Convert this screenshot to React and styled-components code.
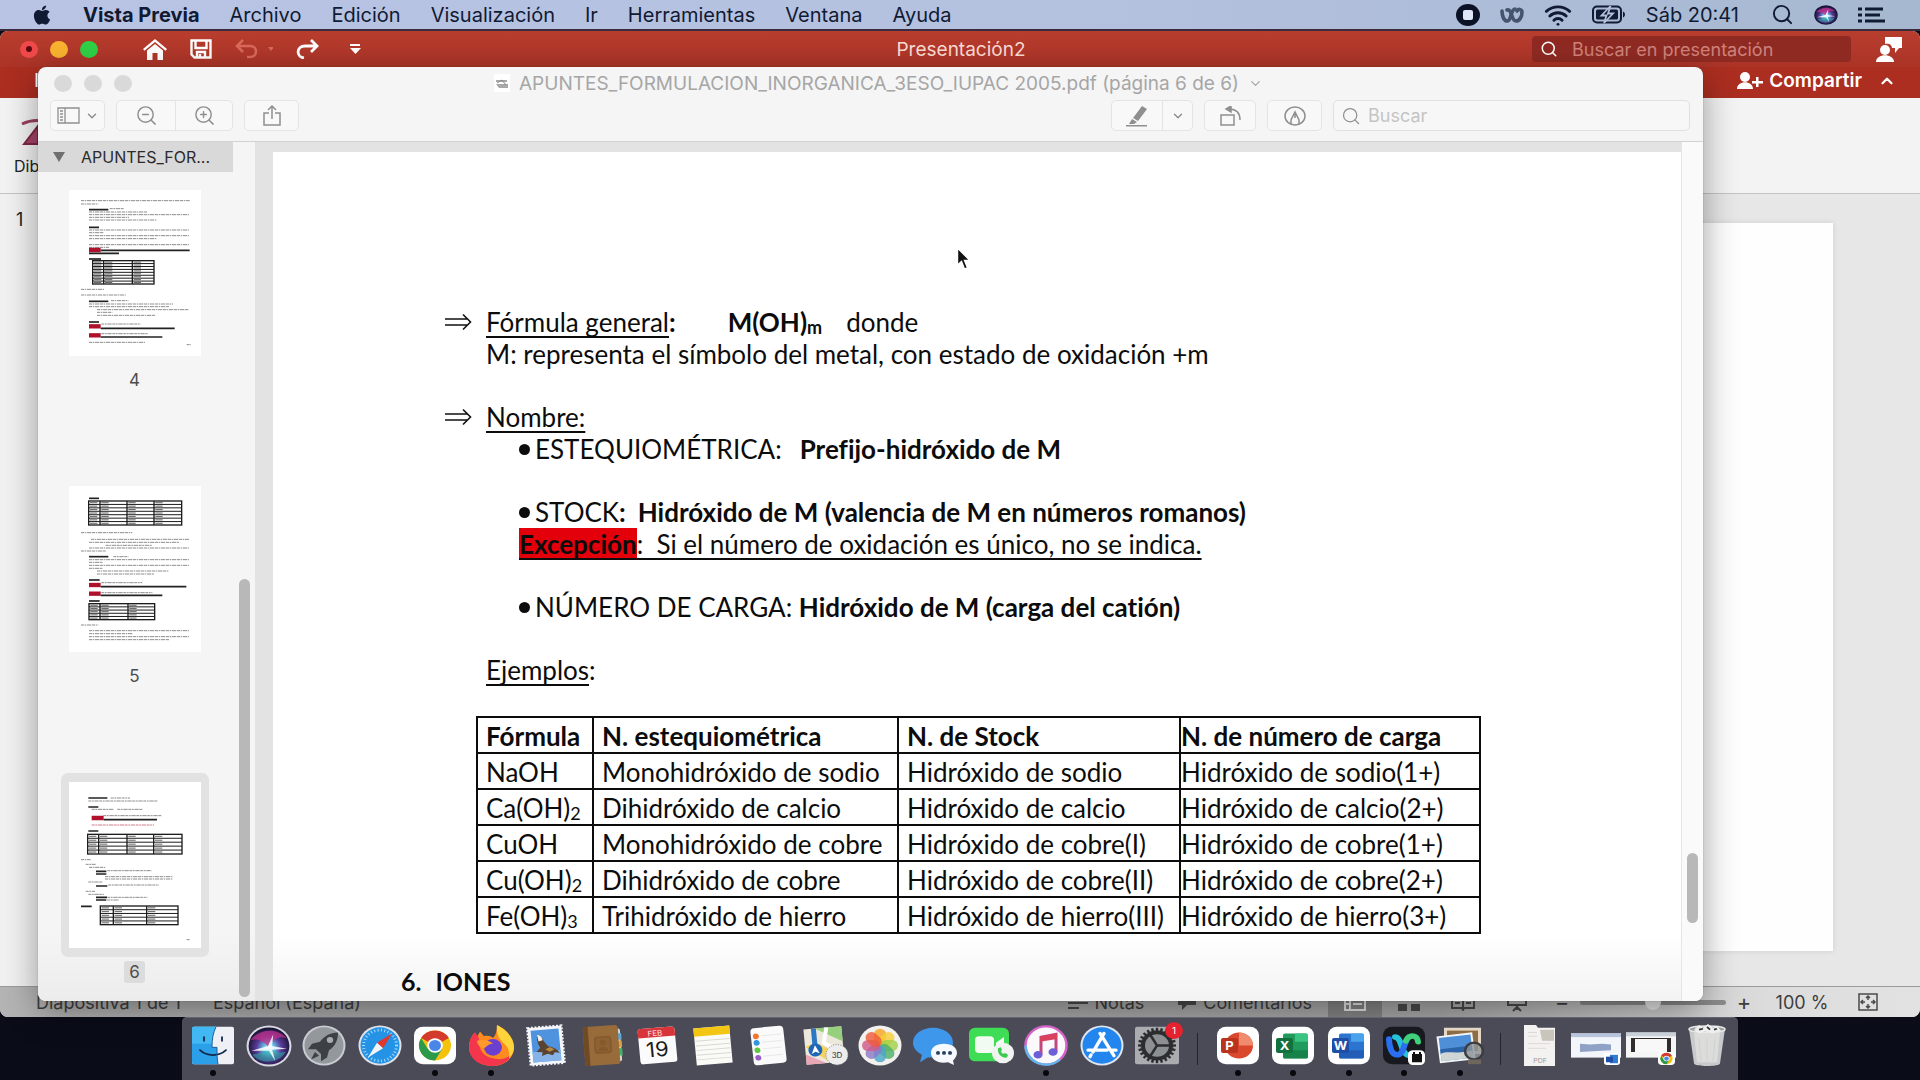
import React, { useState } from 'react'
import styled, { createGlobalStyle, css } from 'styled-components'
import { FaApple } from 'react-icons/fa'
import { Search, ZoomIn, ZoomOut, Wifi, ChevronDown, ChevronUp } from 'lucide-react'

const GlobalStyle = createGlobalStyle`
  * { box-sizing: border-box; }
  body {
    margin: 0;
    overflow: hidden;
    background: #0a0c18;
    font-family: Inter, "Liberation Sans", sans-serif;
  }
  button {
    border: 0;
    padding: 0;
    margin: 0;
    background: none;
    color: inherit;
    font: inherit;
    cursor: default;
  }
  input { font: inherit; }
  svg { display: block; flex: none; }
`

const Desktop = styled.div`
  position: relative;
  display: flex;
  flex-direction: column;
  height: 100vh;
  background: #0a0c18;
`

/* ---------- menu bar ---------- */

const MenuBar = styled.header`
  display: flex;
  justify-content: space-between;
  align-items: center;
  height: 31px;
  padding: 0 34px 0 31px;
  background: linear-gradient(90deg, #b9c4e4, #b3c0de 60%, #a6b8d0);
  border-bottom: 2px solid #3a2c3c;
  color: #101a33;
  font-size: 20px;
  line-height: 28px;
`

const MenuItems = styled.nav`
  display: flex;
  align-items: center;
  gap: 30px;
`

const MenuItem = styled.button`
  font-weight: ${(p) => (p.$strong ? 700 : 400)};
  white-space: nowrap;
`

const MenuExtras = styled.div`
  display: flex;
  align-items: center;
  gap: 20px;
`

const Clock = styled.span`
  margin-right: 12px;
  white-space: nowrap;
`

/* ---------- PowerPoint window ---------- */

const SlidesWindow = styled.section`
  display: flex;
  flex-direction: column;
  flex: 1;
  min-height: 0;
  overflow: hidden;
  background: #e6e6e6;
  border-radius: 8px;
`

const TitleBar = styled.div`
  display: grid;
  grid-template-columns: 1fr auto 1fr;
  align-items: center;
  height: 36px;
  padding: 0 18px 0 20px;
  background: linear-gradient(#b83d2e, #ab3427);
  color: #fbdcd4;
  font-size: 19px;
`

const TitleTools = styled.div`
  display: flex;
  align-items: center;
  gap: 23px;
`

const Lights = styled.div`
  display: flex;
  gap: 12px;
  margin-right: 22px;
`

const Light = styled.button`
  display: grid;
  place-items: center;
  width: 18px;
  height: 17px;
  border-radius: 50%;
  background: ${(p) => p.$color};
`

const LightDot = styled.i`
  width: 6px;
  height: 6px;
  border-radius: 50%;
  background: #5c0a10;
`

const TitleRight = styled.div`
  display: flex;
  align-items: center;
  justify-content: flex-end;
  gap: 24px;
  color: #fff;
`

const SlideSearch = styled.label`
  display: flex;
  align-items: center;
  gap: 14px;
  width: 319px;
  height: 26px;
  padding: 0 8px;
  border-radius: 4px;
  background: #8f2a23;
  input {
    flex: 1;
    min-width: 0;
    padding: 0;
    border: 0;
    outline: 0;
    background: none;
    color: #fff;
    font-size: 18px;
  }
  input::placeholder { color: #d0827a; opacity: 1; }
`

const TabRow = styled.div`
  display: flex;
  align-items: center;
  justify-content: space-between;
  height: 31px;
  padding: 0 24px 4px 34px;
  background: #ac2e20;
  color: #fff;
  font-size: 19px;
`

const ShareArea = styled.div`
  display: flex;
  align-items: center;
  gap: 16px;
`

const ShareLink = styled.button`
  display: flex;
  align-items: center;
  gap: 6px;
  font-weight: 600;
`

const Ribbon = styled.div`
  height: 96px;
  padding: 20px 14px 0;
  background: #f4f3f3;
  border-bottom: 1px solid #c4c4c4;
`

const RibbonButton = styled.button`
  display: flex;
  flex-direction: column;
  align-items: flex-start;
  gap: 8px;
  font-size: 16px;
  line-height: 24px;
  color: #222;
`

const Workspace = styled.div`
  display: flex;
  flex: 1;
  min-height: 0;
`

const SlideList = styled.ol`
  width: 15%;
  margin: 0;
  padding: 14px 16px;
  list-style: none;
  background: #f1f1f1;
  font-size: 18px;
  line-height: 24px;
  color: #222;
`

const SlideArea = styled.div`
  display: flex;
  flex: 1;
  padding: 29px 87px 35px 40px;
  background: #e7e7e7;
`

const Slide = styled.div`
  flex: 1;
  background: #fefefe;
  box-shadow: 0 0 6px rgba(0, 0, 0, 0.1);
`

const StatusBar = styled.footer`
  display: flex;
  align-items: center;
  justify-content: space-between;
  height: 31px;
  padding: 0 35px 0 36px;
  border-top: 1px solid #9b9b9b;
  background: linear-gradient(90deg, #b4b4b4, #a9a9a9 20%, #a9a9a9 75%, #dcdcdc 92%, #e2e2e2);
  color: #3e3e3e;
  font-size: 18px;
`

const StatusGroup = styled.div`
  display: flex;
  align-items: center;
  gap: ${(p) => p.$gap || 8}px;
  height: 100%;
  white-space: nowrap;
`

const StatusButton = styled.button`
  display: flex;
  align-items: center;
  gap: 6px;
`

const ViewModes = styled.div`
  display: flex;
  height: 100%;
  margin-left: 8px;
`

const ViewMode = styled.button`
  display: grid;
  place-items: center;
  width: 54px;
  background: ${(p) => (p.$active ? '#868686' : 'none')};
`

const ZoomStep = styled.button`
  width: 20px;
  font-size: 22px;
  line-height: 22px;
`

const ZoomSlider = styled.input`
  appearance: none;
  width: 146px;
  height: 5px;
  margin: 0;
  border-radius: 3px;
  background: #8c8c8c;
  &::-webkit-slider-thumb {
    appearance: none;
    width: 16px;
    height: 16px;
    border-radius: 50%;
    background: #e8e8e8;
  }
`

const ZoomValue = styled.button`
  width: 80px;
`

const FitButton = styled.button`
  display: grid;
  place-items: center;
  width: 35px;
`

/* ---------- Preview window ---------- */

const PreviewWindow = styled.section`
  position: absolute;
  top: 67px;
  right: 217px;
  bottom: 79px;
  left: 38px;
  z-index: 1;
  display: flex;
  flex-direction: column;
  overflow: hidden;
  border-radius: 8px;
  background: #f5f5f5;
  box-shadow: 0 10px 34px rgba(0, 0, 0, 0.38), 0 0 1px rgba(0, 0, 0, 0.5);
`

const PreviewTitle = styled.div`
  display: grid;
  grid-template-columns: 1fr auto 1fr;
  align-items: center;
  height: 32px;
  padding-left: 16px;
  color: #a6a6a6;
  font-size: 19px;
`

const FileName = styled.div`
  display: flex;
  align-items: center;
  gap: 9px;
  white-space: nowrap;
`

const Toolbar = styled.div`
  display: flex;
  align-items: center;
  justify-content: space-between;
  height: 43px;
  padding: 0 13px 9px 12px;
  border-bottom: 1px solid #d2d2d2;
  color: #8f8f8f;
`

const ToolGroup = styled.div`
  display: flex;
  align-items: center;
  gap: 11px;
`

const Segments = styled.div`
  display: flex;
  height: 31px;
  border: 1px solid #e4e4e4;
  border-radius: 5px;
  background: #f8f8f8;
`

const Tool = styled.button`
  display: flex;
  align-items: center;
  justify-content: center;
  gap: 5px;
  width: ${(p) => p.$width || 53}px;
  & + & { border-left: 1px solid #e4e4e4; }
`

const FindBox = styled.label`
  display: flex;
  align-items: center;
  gap: 7px;
  width: 357px;
  height: 31px;
  padding: 0 7px;
  border: 1px solid #e0e0e0;
  border-radius: 5px;
  background: #f7f7f7;
  input {
    flex: 1;
    min-width: 0;
    padding: 0;
    border: 0;
    outline: 0;
    background: none;
    font-size: 18px;
  }
  input::placeholder { color: #c4c4c4; opacity: 1; }
`

const PreviewBody = styled.div`
  display: flex;
  flex: 1;
  min-height: 0;
`

const Sidebar = styled.aside`
  display: flex;
  width: 217px;
  background: linear-gradient(#f5f5f5 92%, #ececec);
`

const SidebarList = styled.div`
  display: flex;
  flex-direction: column;
  flex: 1;
`

const SidebarHeader = styled.button`
  display: flex;
  align-items: center;
  gap: 16px;
  height: 30px;
  padding-left: 15px;
  background: #d9d9d9;
  color: #2b2b2b;
  font-size: 16px;
  white-space: nowrap;
`

const Thumbs = styled.div`
  display: flex;
  flex-direction: column;
  align-items: center;
  gap: 86px;
  padding: 9px 2px 0 0;
`

const ThumbButton = styled.button`
  display: flex;
  flex-direction: column;
  align-items: center;
  gap: 4px;
  color: #4d4d4d;
  font-size: 17px;
`

const ThumbFrame = styled.span`
  padding: 9px 8px;
  border-radius: 7px;
  background: ${(p) => (p.$selected ? '#e2e2e2' : 'none')};
`

const ThumbLabel = styled.span`
  padding: 0 5px;
  border-radius: 3px;
  line-height: 22px;
  background: ${(p) => (p.$selected ? '#dcdcdc' : 'none')};
`

const Track = styled.div`
  display: flex;
  flex-direction: column;
  width: 22px;
  padding: ${(p) => p.$pad};
  ${(p) => p.$line && css`
    border-left: 1px solid #e6e6e6;
    background: #fafafa;
  `}
`

const TrackThumb = styled.div`
  width: 11px;
  height: ${(p) => p.$size};
  border-radius: 6px;
  background: #b8b8b8;
`

const PageView = styled.main`
  flex: 1;
  min-width: 0;
  padding: 10px 0 0 18px;
  overflow: hidden;
  background: #e3e3e3;
`

const Page = styled.article`
  height: 100%;
  padding: 154px 128px 0;
  background: linear-gradient(#fff 92%, #f3f3f3);
  color: #0c0c0c;
  font-family: Lato, Carlito, sans-serif;
  font-size: 26px;
  font-variant-ligatures: none;
  line-height: 32px;
`

const Indented = styled.div`
  display: flex;
  flex-direction: column;
  gap: 31px;
  padding-left: 85px;
`

const Paragraph = styled.div`
  white-space: pre;
`

const Heading = styled.div`
  display: flex;
  align-items: center;
  gap: 14px;
  margin-left: -42px;
`

const Bullets = styled.div`
  padding-left: 33px;
`

const Bullet = styled.div`
  display: flex;
  align-items: center;
  gap: 5px;
  white-space: pre;
  &::before {
    content: "";
    width: 11px;
    height: 11px;
    border-radius: 50%;
    background: #0c0c0c;
  }
`

const Tabbed = styled.span`
  padding-left: ${(p) => p.$gap}px;
`

const U = styled.span`
  text-decoration: underline;
  text-decoration-thickness: 2px;
  text-underline-offset: 4px;
  text-decoration-skip-ink: none;
`

const Marked = styled.b`
  display: inline-block;
  background: #e3000b;
`

const Sub = styled.sub`
  font-size: 18px;
  line-height: 0;
  vertical-align: -2px;
`

const Examples = styled.table`
  width: 1003px;
  max-width: 100%;
  margin: 30px 0 31px 75px;
  border-collapse: collapse;
  table-layout: fixed;
  td, th {
    height: 36px;
    padding: 2px 0 0 8px;
    border: 2px solid #0c0c0c;
    line-height: 30px;
    text-align: left;
    white-space: nowrap;
  }
  td:last-child, th:last-child { padding-left: 0; }
`

const Chapter = styled.h2`
  display: flex;
  gap: 14px;
  margin: 0;
  font-size: 25px;
  line-height: 32px;
`

const Pointer = styled.svg`
  position: absolute;
  top: 246px;
  left: 956px;
  z-index: 2;
`

/* ---------- dock ---------- */

const Dock = styled.nav`
  position: relative;
  z-index: 3;
  display: flex;
  align-self: center;
  width: 81%;
  height: 63px;
  padding: 0 3px;
  border-radius: 5px 5px 0 0;
  background: #4b4b58;
  border-top: 1px solid #63636e;
`

const DockButton = styled.button`
  display: flex;
  flex: 1;
  flex-direction: column;
  align-items: center;
  gap: 4px;
  padding-top: 7px;
`

const RunningDot = styled.i`
  width: 6px;
  height: 6px;
  border-radius: 50%;
  background: #07070d;
`

const DockLine = styled.span`
  width: 25px;
  padding: 15px 12px;
  background: #23232d content-box;
`

/* ---------- drawings ---------- */

// Each line is [x1, x2, y, kind]: b = bold or underlined, r = red label, p = pink text
const pages = [
  {
    number: 4,
    lines: [
      [36, 362, 32], [36, 88, 42], [60, 118, 59, 'b'], [122, 165, 56], [60, 235, 66], [60, 360, 74], [60, 180, 82],
      [60, 262, 90], [60, 90, 112, 'b'], [60, 360, 120], [60, 105, 128], [60, 360, 137], [60, 262, 146],
      [60, 360, 164], [60, 120, 172], [60, 95, 180, 'r'], [95, 362, 181, 'b'], [60, 150, 190, 'b'], [60, 96, 207, 'b'],
      [36, 105, 298], [36, 170, 315], [60, 118, 334, 'b'], [126, 178, 332], [60, 312, 342], [60, 300, 350],
      [84, 360, 359], [84, 130, 367], [84, 260, 376], [60, 90, 396, 'b'], [97, 215, 402], [60, 95, 409, 'r'],
      [95, 317, 415, 'b'], [60, 95, 436, 'r'], [97, 236, 431], [95, 280, 441, 'b'], [60, 228, 457], [353, 366, 464],
    ],
    tables: [{ x: 71, y: 212, w: 184, h: 70, rows: 8, cols: [104, 190] }],
  },
  {
    number: 5,
    lines: [
      [60, 90, 37, 'b'], [36, 190, 140], [66, 360, 160], [60, 330, 169], [110, 248, 178], [60, 360, 186], [36, 110, 195],
      [60, 118, 212, 'b'], [133, 178, 212], [60, 360, 221], [60, 100, 229], [60, 360, 238], [60, 100, 247],
      [84, 300, 255], [84, 255, 264], [60, 92, 282, 'b'], [97, 220, 290], [60, 95, 297, 'r'], [95, 352, 302, 'b'],
      [60, 95, 323, 'r'], [97, 250, 320], [95, 280, 328, 'b'], [60, 92, 345, 'b'], [36, 88, 417], [60, 360, 434],
      [60, 190, 443], [60, 360, 452], [60, 300, 461],
    ],
    tables: [
      { x: 59, y: 45, w: 279, h: 72, rows: 7, cols: [93, 174, 255] },
      { x: 60, y: 353, w: 197, h: 48, rows: 5, cols: [93, 177] },
    ],
  },
  {
    number: 6,
    lines: [
      [58, 115, 48, 'b'], [125, 183, 48], [58, 265, 57], [58, 88, 75, 'b'], [68, 135, 82], [145, 222, 82],
      [103, 278, 101], [68, 104, 108, 'r'], [104, 264, 113, 'b'], [68, 255, 129, 'p'], [58, 88, 147, 'b'],
      [36, 65, 233], [50, 80, 247], [60, 110, 256], [81, 112, 268, 'b'], [115, 248, 266], [81, 112, 276, 'b'],
      [108, 310, 284], [108, 310, 291], [58, 100, 300], [81, 115, 312, 'b'], [118, 270, 309], [50, 78, 328],
      [58, 105, 337], [81, 114, 346, 'b'], [115, 235, 346], [81, 112, 354, 'b'], [115, 150, 354],
      [36, 68, 373, 'b'], [353, 362, 473],
    ],
    tables: [
      { x: 56, y: 157, w: 283, h: 59, rows: 5, cols: [89, 174, 254] },
      { x: 94, y: 372, w: 233, h: 56, rows: 5, cols: [133, 233] },
    ],
  },
]

const lineStyles = {
  b: { stroke: '#222', strokeWidth: 5 },
  r: { stroke: '#b0102c', strokeWidth: 13 },
  p: { stroke: '#cf7c86', strokeWidth: 3, strokeDasharray: '9 2 5 2 13 2' },
  t: { stroke: '#8d8d8d', strokeWidth: 3, strokeDasharray: '9 2 5 2 13 2' },
}

function PageThumb({ page }) {
  return (
    <svg width="132" height="166" viewBox="0 0 396 498">
      <rect width="396" height="498" fill="#fff" />
      {page.lines.map(([x1, x2, y, kind], i) => (
        <line key={i} x1={x1} x2={x2} y1={y} y2={y} {...lineStyles[kind || 't']} />
      ))}
      {page.tables.map((t) => {
        const step = t.h / t.rows
        const rows = Array.from({ length: t.rows }, (_, i) => t.y + i * step)
        return (
          <g key={t.y} stroke="#1c1c1c" strokeWidth="4" fill="none">
            <rect x={t.x} y={t.y} width={t.w} height={t.h} />
            {rows.slice(1).map((y) => <line key={y} x1={t.x} x2={t.x + t.w} y1={y} y2={y} strokeWidth="3" />)}
            {t.cols.map((x) => <line key={x} x1={x} x2={x} y1={t.y} y2={t.y + t.h} />)}
            {rows.map((y) => [t.x, ...t.cols].map((x) => (
              <line key={x + '-' + y} x1={x + 4} x2={x + 26} y1={y + step / 2} y2={y + step / 2} stroke="#666" strokeWidth="3" />
            )))}
          </g>
        )
      })}
    </svg>
  )
}

const Arrow = () => (
  <svg width="28" height="18" viewBox="0 0 28 18" fill="none" stroke="#111" strokeWidth="1.6">
    <path d="M1 6h23M1 12h23M19 1.500l7.500 7.500l-7.500 7.500" />
  </svg>
)

const WebexMark = () => (
  <svg width="24" height="16" viewBox="0 0 24 16" fill="none" stroke="#46536c" strokeWidth="3.600" strokeLinecap="round">
    <path d="M2 4c0 5 2 10 5 10s3-3 4-6 2-6 4-6" />
    <path d="M7 3c3-1 4 3 5 6s2 5 4 5c4 0 6-5 6-9 0-2-3-4-5-1" />
  </svg>
)

const BatteryMark = () => (
  <svg width="34" height="19" viewBox="0 0 34 19">
    <rect x="1" y="1.500" width="28" height="16" rx="4" fill="none" stroke="#101a33" strokeWidth="2" />
    <rect x="4" y="4.500" width="22" height="10" rx="1.500" fill="#101a33" />
    <path d="M31 6.500v6c2.600-.8 2.600-5.200 0-6z" fill="#101a33" />
    <path d="M18.500 1L9.500 10.500h5L12 18l9-9.500h-5z" fill="#101a33" stroke="#b1bfdc" strokeWidth="1.800" />
  </svg>
)

const SiriMark = ({ size = 24 }) => (
  <svg width={size} height={size - 4} viewBox="0 0 44 44" preserveAspectRatio="none">
    <defs>
      <radialGradient id="siriGlow" cx=".5" cy=".55" r=".55">
        <stop offset="0" stopColor="#e9fbff" />
        <stop offset=".22" stopColor="#62c7e8" />
        <stop offset=".55" stopColor="#5b3a9a" />
        <stop offset="1" stopColor="#12102c" />
      </radialGradient>
    </defs>
    <circle cx="22" cy="22" r="21.500" fill={size > 30 ? '#d9d8e0' : '#1a1640'} />
    <circle cx="22" cy="22" r="19.500" fill="url(#siriGlow)" />
    <path d="M4 16C12 4 30 2 39 14c-8-4-14 2-18 9C16 16 10 14 4 16z" fill="#c3308c" opacity=".75" />
    <path d="M6 31c8-1 12-4 16-8 4 5 9 7 16 5-6 12-24 14-32 3z" fill="#29b7a8" opacity=".55" />
    <path d="M5 27l16-5 5-12-1 12 14 3-14 1 3 12-6-11z" fill="#fff" opacity=".85" />
  </svg>
)

const ListMark = () => (
  <svg width="28" height="18" viewBox="0 0 28 18" stroke="#101a33" strokeWidth="3">
    <path d="M0 3h4M0 9h4M0 15h4M7 3h18M7 9h15M7 15h20" />
  </svg>
)

const gear = Array.from({ length: 24 }, (_, i) => i * 15)
const petals = ['#f6a623', '#f7d038', '#a3cf4b', '#4fb06d', '#4aa7c9', '#8c79c6', '#cf5a8b', '#ef5a3c']

const Office = ({ letter, dark, mid, light, round }) => (
  <>
    <rect x="1" y="2" width="42" height="40" rx="9" fill="#fff" />
    {round ? (
      <>
        <circle cx="23" cy="22" r="14" fill={mid} />
        <path d="M23 8a14 14 0 0 1 14 14H23z" fill={light} />
      </>
    ) : (
      <>
        <rect x="12" y="9" width="25" height="27" rx="2" fill={mid} />
        <path d="M24 9h11a2 2 0 0 1 2 2v7H24z" fill={light} />
        <path d="M12 27h25v7a2 2 0 0 1-2 2H14a2 2 0 0 1-2-2z" fill={dark} opacity=".6" />
      </>
    )}
    <rect x="5" y="14" width="17" height="16" rx="2" fill={dark} />
    <text x="13.500" y="27" fontSize="13" fontWeight="700" textAnchor="middle" fill="#fff">{letter}</text>
  </>
)

const ChromeRing = () => (
  <>
    <circle r="16" fill="#f4c20d" />
    <path d="M0 0L-13.900-8A16 16 0 0 1 13.900-8z" fill="#d33b2c" />
    <path d="M-13.900-8A16 16 0 0 0 0 16L7 4-7 4z" fill="#2d9a4b" />
    <circle r="7.800" fill="#fff" />
    <circle r="6" fill="#4a86e8" />
  </>
)

const drawings = {
  Finder: (
    <>
      <rect x="1" y="2" width="42" height="40" rx="2" fill="#eef0f5" />
      <path d="M3 2h22c-3 7-4 13-4 22h5c0 7 0 12 1 18H3a2 2 0 0 1-2-2V4a2 2 0 0 1 2-2z" fill="#2b9fe8" />
      <path d="M3 2h22c-3 7-4 13-4 18H1V4a2 2 0 0 1 2-2z" fill="#42b8f2" />
      <path d="M13 13v4M31 13v4M9 27c7 7 19 7 26 0" fill="none" stroke="#12294a" strokeWidth="1.800" strokeLinecap="round" />
      <path d="M25 2c-3 7-4 13-4 22h5c0 7 0 12 1 18" fill="none" stroke="#1c5e96" strokeWidth="1" />
    </>
  ),
  Launchpad: (
    <>
      <circle cx="22" cy="22" r="21.500" fill="#c9ccd0" />
      <circle cx="22" cy="22" r="19.500" fill="#93989d" />
      <path d="M36 8c-8 0-14 4-18 10l-8 2-4 6 8 0 5 5 0 8 6-4 2-8c6-4 9-11 9-19z" fill="#3d4044" />
      <circle cx="28" cy="16" r="3.200" fill="#a8acb0" />
      <path d="M13 29l-4 8 8-4z" fill="#3d4044" />
    </>
  ),
  Safari: (
    <>
      <circle cx="22" cy="22" r="21.500" fill="#dfe3e8" />
      <circle cx="22" cy="22" r="19.500" fill="#2493e6" />
      <circle cx="22" cy="22" r="16.500" fill="none" stroke="#a8dcfb" strokeWidth="3" strokeDasharray="1 2.400" />
      <path d="M34 9L25 25l-6-6z" fill="#e3362c" />
      <path d="M10 35l15-10-6-6z" fill="#f3f4f6" />
    </>
  ),
  Chrome: (
    <>
      <rect x="1" y="2" width="42" height="40" rx="9" fill="#fff" />
      <g transform="translate(22 22)"><ChromeRing /></g>
    </>
  ),
  Firefox: (
    <>
      <path d="M28 0c8 4 17 13 17 24 0 12-10 20-22 20S0 35 0 24C0 17 3 11 6 8l2 5 3-6 4 5c4-1 7 0 9 2 3-3 4-8 4-14z" fill="#ff8a1f" />
      <path d="M0 24c0 12 10 20 23 20 10 0 18-6 21-14-6 6-12 8-19 6C14 34 9 26 10 14L6 8C3 11 0 17 0 24z" fill="#f4364c" />
      <path d="M28 0c8 4 17 13 17 24 0 5-2 9-5 12 1-8-1-13-6-17-3-4-7-7-6-19z" fill="#ffd43a" />
      <circle cx="24" cy="24" r="9" fill="#6b3fd0" />
      <path d="M8 17c6-2 12-1 16 3-5 0-6 3-9 5-4-1-7-4-7-8z" fill="#ff9a2b" />
    </>
  ),
  Mail: (
    <g transform="rotate(-5 22 22)">
      <rect x="5" y="2" width="34" height="40" fill="#f4f6fa" stroke="#f4f6fa" strokeWidth="2.500" strokeDasharray="2 1.600" />
      <rect x="8" y="5" width="28" height="34" fill="#4f93df" />
      <path d="M8 28h28v11H8z" fill="#87b4e8" />
      <path d="M14 10c3 0 5 3 6 7l4 6c5 1 9 4 11 8l-5-1-2 3-5-2-6 2 1-4-6-1 4-4c-2-4-3-9-2-14z" fill="#5a4330" />
      <path d="M14 10c3 0 5 3 5 6l-4 1z" fill="#eee" />
      <path d="M21 26l5-2 4 3-5 2z" fill="#b98a3f" />
    </g>
  ),
  Contactos: (
    <g transform="rotate(-4 22 22)">
      <rect x="36" y="5" width="5" height="35" rx="2" fill="#ddd6c4" />
      <path d="M38 10h4v7h-4z" fill="#5aa9d8" />
      <path d="M38 18h4v7h-4z" fill="#d9a13c" />
      <path d="M38 26h4v8h-4z" fill="#43b06a" />
      <rect x="4" y="1" width="35" height="42" rx="3" fill="#976b3a" />
      <path d="M4 4a3 3 0 0 1 3-3h2v42H7a3 3 0 0 1-3-3z" fill="#6f4a25" />
      <rect x="15" y="13" width="16" height="17" rx="3" fill="#8d6233" stroke="#845a2d" strokeWidth="1.500" />
      <circle cx="23" cy="19" r="3" fill="#845a2d" />
      <path d="M18 28c1-6 9-6 10 0z" fill="#845a2d" />
    </g>
  ),
  Calendario: (
    <g transform="rotate(-5 22 22)">
      <rect x="4" y="3" width="37" height="38" rx="3" fill="#fbfbfb" />
      <path d="M4 13V6a3 3 0 0 1 3-3h31a3 3 0 0 1 3 3v7z" fill="#d8343a" />
      <text x="21" y="11.500" fontSize="8" textAnchor="middle" fill="#ffe3e3">FEB</text>
      <text x="22" y="34" fontSize="22" textAnchor="middle" fill="#1c1c1c">19</text>
    </g>
  ),
  Notas: (
    <g transform="rotate(-5 22 22)">
      <rect x="4" y="2" width="36" height="40" fill="#fafaf7" />
      <rect x="4" y="2" width="36" height="9" fill="#f3c614" />
      <path d="M5 16h34M5 21h34M5 26h34M5 31h34M5 36h34" stroke="#d9d9d2" strokeWidth="1" />
    </g>
  ),
  Recordatorios: (
    <g transform="rotate(-6 22 22)">
      <rect x="6" y="2" width="33" height="40" rx="4" fill="#fafafa" />
      <path d="M16 11h20M16 18h20M16 25h20M16 33h20" stroke="#e8e8e8" />
      <circle cx="11" cy="11" r="3" fill="#f2762e" />
      <circle cx="11" cy="18" r="3" fill="#3495dd" />
      <circle cx="11" cy="26" r="3" fill="#5cc83c" />
      <circle cx="11" cy="34" r="3" fill="#9a5cc8" />
    </g>
  ),
  Mapas: (
    <>
      <g transform="rotate(-5 22 22)">
        <rect x="3" y="3" width="38" height="38" fill="#ece8dc" />
        <path d="M14 3h27v16z" fill="#96d07c" />
        <path d="M3 22l11-4 27 17v6H28z" fill="#f5d35c" />
        <path d="M3 30l20 11H3z" fill="#e9a6b4" />
        <path d="M26 3l-4 16 19 14" fill="none" stroke="#fff" strokeWidth="4" />
        <path d="M13 3v22" stroke="#2c77c4" strokeWidth="5" />
        <circle cx="13" cy="26" r="7" fill="#1e66b8" />
        <path d="M13 21l4 9-4-2-4 2z" fill="#fff" />
      </g>
      <circle cx="35" cy="32" r="11" fill="#ededed" stroke="#777" strokeWidth="1" strokeDasharray="1 1.500" />
      <text x="35" y="35" fontSize="8" textAnchor="middle" fill="#333">3D</text>
    </>
  ),
  Fotos: (
    <>
      <circle cx="22" cy="22" r="21.500" fill="#f3f1ee" />
      {petals.map((fill, i) => (
        <rect key={fill} x="16" y="4" width="12" height="18" rx="6" fill={fill} opacity=".82" transform={`rotate(${i * 45} 22 22)`} />
      ))}
    </>
  ),
  Mensajes: (
    <>
      <path d="M20 3c11 0 20 7 20 16s-9 16-20 16c-2 0-3 0-5-.5L7 40l2-8C4 29 0 25 0 19 0 10 9 3 20 3z" fill="#3f97ec" />
      <path d="M31 20c8 0 13 4 13 10 0 3-2 6-4 8l1 5-6-3c-10 2-17-3-17-10 0-6 5-10 13-10z" fill="#f5f8fc" />
      <circle cx="25" cy="30" r="2" fill="#27405f" />
      <circle cx="31" cy="30" r="2" fill="#27405f" />
      <circle cx="37" cy="30" r="2" fill="#27405f" />
    </>
  ),
  FaceTime: (
    <>
      <rect x="0" y="3" width="40" height="36" rx="6" fill="#3fdc55" />
      <rect x="6" y="12" width="19" height="18" rx="4" fill="#f2fbf2" />
      <path d="M27 19l8-6v16l-8-6z" fill="#f2fbf2" />
      <circle cx="34" cy="30" r="11" fill="#f1f3f1" />
      <path d="M29 25c-1 6 4 11 9 10l1-3-3-2-2 1c-1-1-2-2-2-3l1-1-1-3z" fill="#3acb50" />
    </>
  ),
  iTunes: (
    <>
      <circle cx="22" cy="22" r="20.500" fill="#fbf9fc" stroke="#d563c8" strokeWidth="2.500" />
      <path d="M1.500 22A20.500 20.500 0 0 0 36 37" fill="none" stroke="#5fb7ea" strokeWidth="2.500" />
      <path d="M17 32V13l15-3v19" fill="none" stroke="#c2467f" strokeWidth="3" />
      <path d="M16 12l17-3v6l-17 3z" fill="#d9415f" />
      <ellipse cx="14" cy="32" rx="4.500" ry="4" fill="#6d5fd5" />
      <ellipse cx="29" cy="29" rx="4.500" ry="4" fill="#6d5fd5" />
    </>
  ),
  'App Store': (
    <>
      <circle cx="22" cy="22" r="21.500" fill="#dfe6ef" />
      <circle cx="22" cy="22" r="19.500" fill="#2385ee" />
      <path d="M24 9L13 29M20 9l14 24M8 27h19M31 27h5M11 32l-1 2" stroke="#fff" strokeWidth="3.400" strokeLinecap="round" />
    </>
  ),
  'Preferencias del Sistema': (
    <>
      <rect x="0" y="2" width="44" height="40" rx="2" fill="#a9adb0" />
      <circle cx="22" cy="22" r="17" fill="#8c9093" />
      {gear.map((a) => <rect key={a} x="20.800" y="3" width="2.400" height="5" fill="#2b2d2f" transform={`rotate(${a} 22 22)`} />)}
      <circle cx="22" cy="22" r="14" fill="none" stroke="#2b2d2f" strokeWidth="4" />
      <circle cx="22" cy="22" r="9" fill="#8c9093" />
      <path d="M22 22L15 10M22 22h13M22 22l-7 12" stroke="#2b2d2f" strokeWidth="2.600" />
      <circle cx="39" cy="6" r="9" fill="#e6222e" />
      <text x="39" y="10" fontSize="10" textAnchor="middle" fill="#fff">1</text>
    </>
  ),
  PowerPoint: <Office letter="P" dark="#b8341f" mid="#d9482d" light="#f08b6e" round />,
  Excel: <Office letter="X" dark="#12713d" mid="#1f9c5c" light="#3bc481" />,
  Word: <Office letter="W" dark="#1d4fa8" mid="#2b74d0" light="#49a3ec" />,
  Webex: (
    <>
      <rect x="1" y="2" width="42" height="40" rx="9" fill="#17191e" />
      <path d="M13 13c5 0 6 9 8 14 2 4 5 6 8 5" fill="none" stroke="#27c1d8" strokeWidth="6" strokeLinecap="round" />
      <path d="M7 15c0 9 3 17 8 17 6 0 6-8 9-14" fill="none" stroke="#2a6ff0" strokeWidth="6" strokeLinecap="round" />
      <path d="M24 17c3-7 11-7 12 1" fill="none" stroke="#3ed07a" strokeWidth="6" strokeLinecap="round" />
      <rect x="26" y="27" width="17" height="16" rx="5" fill="#fff" />
      <path d="M30 31h10v9H30zM31 29h2v3h-2zM37 29h2v3h-2z" fill="#111" />
    </>
  ),
  'Vista Previa': (
    <>
      <path d="M6 3h37v28H6z" fill="#e4d7c3" />
      <path d="M9 6h31v22H9z" fill="#8e6d44" />
      <g transform="rotate(-7 18 24)">
        <path d="M0 10h36v29H0z" fill="#f2f4f6" />
        <path d="M2 12h32v25H2z" fill="#4f8fd8" />
        <path d="M2 24h32v6H2z" fill="#2d63a8" />
        <path d="M2 29c8-3 14 3 32 0v8H2z" fill="#cfd6d4" />
      </g>
      <circle cx="36" cy="28" r="9" fill="#8f9598" fillOpacity=".8" stroke="#3c3c40" strokeWidth="2.500" />
      <path d="M30 37h13v5H30z" fill="#6f665e" />
    </>
  ),
  'Documento PDF': (
    <>
      <path d="M6 0h12l2 3h17v41H6z" fill="#f4f2f0" />
      <path d="M22 5h14v12H24z" fill="#c9c5bc" />
      <path d="M10 8h9M10 12h9M10 20h22M10 25h18" stroke="#dcd8d4" />
      <text x="22" y="41" fontSize="7" textAnchor="middle" fill="#999">PDF</text>
    </>
  ),
  'Ventana de Word': (
    <>
      <rect x="-3" y="9" width="50" height="26" fill="#f2f5fa" />
      <rect x="-3" y="9" width="50" height="4" fill="#b7c4dc" />
      <path d="M6 20l10 1 12-1 9 1v6l-14 1-17 1z" fill="#8fa1c4" />
      <rect x="30" y="30" width="16" height="13" rx="3" fill="#fff" />
      <path d="M36 32h8v9h-8z" fill="#2f7bd6" />
      <path d="M32 34h7v6h-7z" fill="#1d4fa8" />
    </>
  ),
  'Ventana de Chrome': (
    <>
      <rect x="-3" y="8" width="50" height="27" fill="#f5f5f5" />
      <path d="M-3 8h50v4H-3z" fill="#c8d0da" />
      <path d="M2 14h40v15H2z" fill="#302c2b" />
      <path d="M6 15h32v14H6z" fill="#f8f8f8" />
      <rect x="29" y="29" width="17" height="14" rx="4" fill="#fff" />
      <g transform="translate(37.500 36) scale(.38)"><ChromeRing /></g>
    </>
  ),
  Papelera: (
    <>
      <path d="M4 4h36l-5 37c0 4-26 4-26 0z" fill="#c8cacb" />
      <path d="M9 8h26l-3 32H12z" fill="#dcdcda" />
      <ellipse cx="22" cy="4.500" rx="18" ry="3.500" fill="#9b9d9f" stroke="#e8e8e8" strokeWidth="1.500" />
      <path d="M9 5l5-5 4 3 5-4 5 4 4-2 4 5-8 3-8-2-6 2z" fill="#efefef" />
      <path d="M14 5l4-1M22 2l3 3M29 5l3-1" stroke="#333" strokeWidth="1.800" />
      <path d="M14 14l2 25M22 14v27M30 14l-2 25" stroke="#cfd0d0" />
    </>
  ),
}

const dockItems = [
  ['Finder', true], ['Siri'], ['Launchpad'], ['Safari'], ['Chrome', true], ['Firefox', true], ['Mail'], ['Contactos'],
  ['Calendario'], ['Notas'], ['Recordatorios'], ['Mapas'], ['Fotos'], ['Mensajes'], ['FaceTime'], ['iTunes', true],
  ['App Store'], ['Preferencias del Sistema'], null,
  ['PowerPoint', true], ['Excel', true], ['Word', true], ['Webex', true], ['Vista Previa', true], null,
  ['Documento PDF'], ['Ventana de Word'], ['Ventana de Chrome'], ['Papelera'],
]

function DockIcon({ name }) {
  if (name === 'Siri') return <SiriMark size={46} />
  return (
    <svg width="44" height="41" viewBox="0 0 44 44" preserveAspectRatio="none" overflow="visible">
      {drawings[name]}
    </svg>
  )
}

const menus = ['Archivo', 'Edición', 'Visualización', 'Ir', 'Herramientas', 'Ventana', 'Ayuda']

const compounds = [
  ['NaOH', '', 'Monohidróxido de sodio', 'Hidróxido de sodio', 'Hidróxido de sodio(1+)'],
  ['Ca(OH)', '2', 'Dihidróxido de calcio', 'Hidróxido de calcio', 'Hidróxido de calcio(2+)'],
  ['CuOH', '', 'Monohidróxido de cobre', 'Hidróxido de cobre(I)', 'Hidróxido de cobre(1+)'],
  ['Cu(OH)', '2', 'Dihidróxido de cobre', 'Hidróxido de cobre(II)', 'Hidróxido de cobre(2+)'],
  ['Fe(OH)', '3', 'Trihidróxido de hierro', 'Hidróxido de hierro(III)', 'Hidróxido de hierro(3+)'],
]

function TopMenu() {
  return (
    <MenuBar>
      <MenuItems>
        <FaApple size={22} />
        <MenuItem $strong>Vista Previa</MenuItem>
        {menus.map((m) => <MenuItem key={m}>{m}</MenuItem>)}
      </MenuItems>
      <MenuExtras>
        <svg width="24" height="22" viewBox="0 0 24 22">
          <ellipse cx="12" cy="11" rx="12" ry="11" fill="#0c1226" />
          <rect x="7" y="6" width="10" height="10" rx="2" fill="#dfe6f5" />
        </svg>
        <WebexMark />
        <Wifi size={28} strokeWidth={2.500} />
        <BatteryMark />
        <Clock>Sáb 20:41</Clock>
        <Search size={23} />
        <SiriMark size={24} />
        <ListMark />
      </MenuExtras>
    </MenuBar>
  )
}

function Slides() {
  const [zoom, setZoom] = useState(50)
  return (
    <SlidesWindow>
      <TitleBar>
        <TitleTools>
          <Lights>
            <Light $color="#f0494c" aria-label="Cerrar"><LightDot /></Light>
            <Light $color="#f9b32f" aria-label="Minimizar" />
            <Light $color="#30d145" aria-label="Ampliar" />
          </Lights>
          <button aria-label="Inicio">
            <svg width="24" height="21" viewBox="0 0 24 21" fill="#fff">
              <path d="M12 0l12 10-1.500 1.800L12 3 1.500 11.800 0 10zM12 5l8 6.600V21h-5.500v-7h-5v7H4v-9.400z" />
            </svg>
          </button>
          <button aria-label="Guardar">
            <svg width="22" height="20" viewBox="0 0 22 20" fill="none" stroke="#fff" strokeWidth="2.400">
              <path d="M1.500 1.500h19v17H4.500l-3-3z" />
              <path d="M5.500 2v7h11V2M7 18v-5h8v5M10 15v3" />
            </svg>
          </button>
          <button aria-label="Deshacer">
            <svg width="38" height="20" viewBox="0 0 38 20" fill="none" stroke="#d9695b" strokeWidth="2.600">
              <path d="M8 1L2 7l6 6M2 7h13c8 0 8 11 0 11h-3" />
              <path d="M33 8h6l-3 4z" fill="#d9695b" stroke="none" />
            </svg>
          </button>
          <button aria-label="Rehacer">
            <svg width="23" height="20" viewBox="0 0 23 20" fill="none" stroke="#fff" strokeWidth="2.800">
              <path d="M15 1l6 6-6 6M21 7H9c-9 0-9 11-1 12" />
            </svg>
          </button>
          <button aria-label="Personalizar">
            <svg width="26" height="12" viewBox="0 0 26 12" fill="#fff"><path d="M8 1h10v2H8zM8 5h11l-5.500 6z" /></svg>
          </button>
        </TitleTools>
        <span>Presentación2</span>
        <TitleRight>
          <SlideSearch>
            <Search size={18} />
            <input aria-label="Buscar en presentación" placeholder="Buscar en presentación" />
          </SlideSearch>
          <button aria-label="Comentarios en línea">
            <svg width="27" height="25" viewBox="0 0 27 25" fill="#fff">
              <path d="M10 0h17v11h-3l-4 5v-5h-3c0-4-4-5-7-4z" />
              <circle cx="10" cy="13" r="5" />
              <path d="M1 25c0-9 18-9 18 0z" />
            </svg>
          </button>
        </TitleRight>
      </TitleBar>
      <TabRow>
        <button>Inicio</button>
        <ShareArea>
          <ShareLink>
            <svg width="26" height="17" viewBox="0 0 26 17" fill="#fff">
              <circle cx="8" cy="5" r="5" />
              <path d="M0 17c0-9 16-9 16 0zM19 5h2.500v4H26v2.500h-4.500V15H19v-3.500h-4V9h4z" />
            </svg>
            Compartir
          </ShareLink>
          <ChevronUp size={18} strokeWidth={3} />
        </ShareArea>
      </TabRow>
      <Ribbon>
        <RibbonButton>
          <svg width="46" height="28" viewBox="0 0 46 28">
            <path d="M8 6C18 1 28 2 36 5M36 5L12 25" fill="none" stroke="#9c3f5c" strokeWidth="3" />
            <path d="M10 26L24 8v18z" fill="#a5446a" stroke="#7c2740" strokeWidth="2" />
          </svg>
          Dibujar
        </RibbonButton>
      </Ribbon>
      <Workspace>
        <SlideList><li>1</li></SlideList>
        <SlideArea><Slide /></SlideArea>
      </Workspace>
      <StatusBar>
        <StatusGroup $gap={32}>
          <span>Diapositiva 1 de 1</span>
          <span>Español (España)</span>
        </StatusGroup>
        <StatusGroup>
          <StatusGroup $gap={33}>
            <StatusButton>
              <svg width="20" height="14" viewBox="0 0 20 14" stroke="#4a4a4a" strokeWidth="2"><path d="M4 3h10M0 8h20M0 13h11" /></svg>
              Notas
            </StatusButton>
            <StatusButton>
              <svg width="20" height="16" viewBox="0 0 20 16" fill="#4a4a4a"><path d="M1 0h18v11h-9l-5 5v-5H1z" /></svg>
              Comentarios
            </StatusButton>
          </StatusGroup>
          <ViewModes>
            <ViewMode $active aria-label="Normal">
              <svg width="22" height="18" viewBox="0 0 22 18" fill="none" stroke="#e6e6e6" strokeWidth="2">
                <path d="M1 1h20v16H1zM6 1v16M9 6h9M9 11h9M1 6h5M1 11h5" />
              </svg>
            </ViewMode>
            <ViewMode aria-label="Clasificador">
              <svg width="24" height="18" viewBox="0 0 24 18" fill="#4a4a4a"><path d="M1 1h9v7H1zM14 1h9v7h-9zM1 11h9v7H1zM14 11h9v7h-9z" /></svg>
            </ViewMode>
            <ViewMode aria-label="Lectura">
              <svg width="24" height="18" viewBox="0 0 24 18" fill="none" stroke="#4a4a4a" strokeWidth="2">
                <path d="M1 2h10l1 1 1-1h10v13H13l-1 2-1-2H1zM12 3v13M4 6h5M4 10h5M15 6h5M15 10h5" />
              </svg>
            </ViewMode>
            <ViewMode aria-label="Presentación">
              <svg width="22" height="20" viewBox="0 0 22 20" fill="none" stroke="#4a4a4a" strokeWidth="2">
                <path d="M0 1h22M2 1v12h18V1M11 13v5M7 19l4-4 4 4" />
              </svg>
            </ViewMode>
          </ViewModes>
          <ZoomStep aria-label="Alejar">−</ZoomStep>
          <ZoomSlider type="range" aria-label="Zoom" value={zoom} onChange={(e) => setZoom(e.target.value)} />
          <ZoomStep aria-label="Acercar">+</ZoomStep>
          <ZoomValue>100 %</ZoomValue>
          <FitButton aria-label="Ajustar">
            <svg width="20" height="18" viewBox="0 0 20 18" fill="none" stroke="#4a4a4a" strokeWidth="1.500">
              <path d="M1 1h18v16H1zM10 3v4M8 5l2-2 2 2M10 15v-4M8 13l2 2 2-2M3 9h4M5 7L3 9l2 2M17 9h-4M15 7l2 2-2 2" />
            </svg>
          </FitButton>
        </StatusGroup>
      </StatusBar>
    </SlidesWindow>
  )
}

function Preview() {
  const [selected, setSelected] = useState(6)
  return (
    <PreviewWindow>
      <PreviewTitle>
        <Lights>
          <Light $color="#d9d9d9" aria-label="Cerrar" />
          <Light $color="#d9d9d9" aria-label="Minimizar" />
          <Light $color="#d9d9d9" aria-label="Ampliar" />
        </Lights>
        <FileName>
          <svg width="16" height="18" viewBox="0 0 16 18">
            <rect width="16" height="18" fill="#fff" />
            <path d="M2 6h11v2H2zM2 10h12v4H5z" fill="#a8a8a8" />
            <path d="M3 9l5-3 4 5" fill="none" stroke="#8a8a8a" />
          </svg>
          APUNTES_FORMULACION_INORGANICA_3ESO_IUPAC 2005.pdf (página 6 de 6)
          <ChevronDown size={15} />
        </FileName>
      </PreviewTitle>
      <Toolbar>
        <ToolGroup>
          <Segments>
            <Tool aria-label="Barra lateral">
              <svg width="23" height="17" viewBox="0 0 23 17" fill="none" stroke="currentColor" strokeWidth="1.300">
                <path d="M1 1h21v15H1zM8 1v15M3 4h3M3 7h3M3 10h3M3 13h3" />
              </svg>
              <ChevronDown size={14} strokeWidth={2.500} />
            </Tool>
          </Segments>
          <Segments>
            <Tool $width={58} aria-label="Alejar"><ZoomOut size={23} strokeWidth={1.500} /></Tool>
            <Tool $width={57} aria-label="Acercar"><ZoomIn size={23} strokeWidth={1.500} /></Tool>
          </Segments>
          <Segments>
            <Tool aria-label="Compartir">
              <svg width="18" height="21" viewBox="0 0 18 21" fill="none" stroke="currentColor" strokeWidth="1.500">
                <path d="M6 8H1v12h16V8h-5M9 14V1M5 5l4-4 4 4" />
              </svg>
            </Tool>
          </Segments>
        </ToolGroup>
        <ToolGroup>
          <Segments>
            <Tool $width={50} aria-label="Resaltar">
              <svg width="24" height="22" viewBox="0 0 24 22" fill="currentColor">
                <path d="M17 1l5 3-9 12-5-3zM7 14l5 3-3 2H4zM1 20h21v1.500H1z" />
              </svg>
            </Tool>
            <Tool $width={30} aria-label="Color"><ChevronDown size={14} strokeWidth={2.500} /></Tool>
          </Segments>
          <Segments>
            <Tool $width={50} aria-label="Girar">
              <svg width="23" height="20" viewBox="0 0 23 20" fill="none" stroke="currentColor" strokeWidth="1.500">
                <path d="M2 9h13v10H2zM21 14c0-7-3-11-11-11" />
                <path d="M12 0L7 3l5 3z" fill="currentColor" />
              </svg>
            </Tool>
          </Segments>
          <Segments>
            <Tool aria-label="Marcación">
              <svg width="22" height="20" viewBox="0 0 22 20" fill="none" stroke="currentColor" strokeWidth="1.500">
                <ellipse cx="11" cy="10" rx="10" ry="9" />
                <path d="M7 18V14l4-8 4 8v4M11 6v6" />
              </svg>
            </Tool>
          </Segments>
          <FindBox>
            <Search size={20} strokeWidth={1.500} />
            <input aria-label="Buscar" placeholder="Buscar" />
          </FindBox>
        </ToolGroup>
      </Toolbar>
      <PreviewBody>
        <Sidebar>
          <SidebarList>
            <SidebarHeader>
              <svg width="12" height="10" viewBox="0 0 12 10" fill="#6f6f6f"><path d="M0 0h12L6 10z" /></svg>
              APUNTES_FOR...
            </SidebarHeader>
            <Thumbs>
              {pages.map((page) => (
                <ThumbButton key={page.number} onClick={() => setSelected(page.number)}>
                  <ThumbFrame $selected={selected === page.number}><PageThumb page={page} /></ThumbFrame>
                  <ThumbLabel $selected={selected === page.number}>{page.number}</ThumbLabel>
                </ThumbButton>
              ))}
            </Thumbs>
          </SidebarList>
          <Track $pad="437px 5px 4px 6px"><TrackThumb $size="100%" /></Track>
        </Sidebar>
        <PageView>
          <Page>
            <Indented>
              <div>
                <Heading>
                  <Arrow />
                  <Paragraph>
                    <U>Fórmula general</U><b>:</b>
                    <Tabbed $gap={52}><b>M(OH)<Sub>m</Sub></b></Tabbed>
                    <Tabbed $gap={24}>donde</Tabbed>
                  </Paragraph>
                </Heading>
                <Paragraph>M: representa el símbolo del metal, con estado de oxidación +m</Paragraph>
              </div>
              <div>
                <Heading><Arrow /><U>Nombre:</U></Heading>
                <Bullets>
                  <Bullet><span>ESTEQUIOMÉTRICA:<Tabbed $gap={18}><b>Prefijo-hidróxido de M</b></Tabbed></span></Bullet>
                </Bullets>
              </div>
              <Bullets>
                <Bullet><span>STOCK<b>:<Tabbed $gap={12}>Hidróxido de M (valencia de M en números romanos)</Tabbed></b></span></Bullet>
                <Paragraph><U><Marked><U>Excepción</U></Marked>:  Si el número de oxidación es único, no se indica.</U></Paragraph>
              </Bullets>
              <Bullets>
                <Bullet><span>NÚMERO DE CARGA: <b>Hidróxido de M (carga del catión)</b></span></Bullet>
              </Bullets>
              <Paragraph><U>Ejemplos</U>:</Paragraph>
            </Indented>
            <Examples>
              <colgroup>
                <col width="116" />
                <col width="305" />
                <col width="282" />
                <col width="300" />
              </colgroup>
              <thead>
                <tr>
                  <th>Fórmula</th>
                  <th>N. estequiométrica</th>
                  <th>N. de Stock</th>
                  <th>N. de número de carga</th>
                </tr>
              </thead>
              <tbody>
                {compounds.map(([formula, sub, ...names]) => (
                  <tr key={formula + sub}>
                    <td>{formula}{sub && <Sub>{sub}</Sub>}</td>
                    {names.map((n) => <td key={n}>{n}</td>)}
                  </tr>
                ))}
              </tbody>
            </Examples>
            <Chapter><span>6.</span><span>IONES</span></Chapter>
          </Page>
        </PageView>
        <Track $line $pad="711px 5px 0"><TrackThumb $size="70px" /></Track>
      </PreviewBody>
    </PreviewWindow>
  )
}

export default function App() {
  return (
    <Desktop>
      <GlobalStyle />
      <TopMenu />
      <Slides />
      <Preview />
      <Pointer width="16" height="25" viewBox="0 0 16 25">
        <path d="M1.500 2v17l4-3.500 3 7.500 3-1.200-3-7.300h5.500z" fill="#111" stroke="#fff" strokeWidth="1.400" />
      </Pointer>
      <Dock>
        {dockItems.map((item, i) => item ? (
          <DockButton key={item[0]} aria-label={item[0]}>
            <DockIcon name={item[0]} />
            {item[1] && <RunningDot />}
          </DockButton>
        ) : <DockLine key={i} />)}
      </Dock>
    </Desktop>
  )
}
